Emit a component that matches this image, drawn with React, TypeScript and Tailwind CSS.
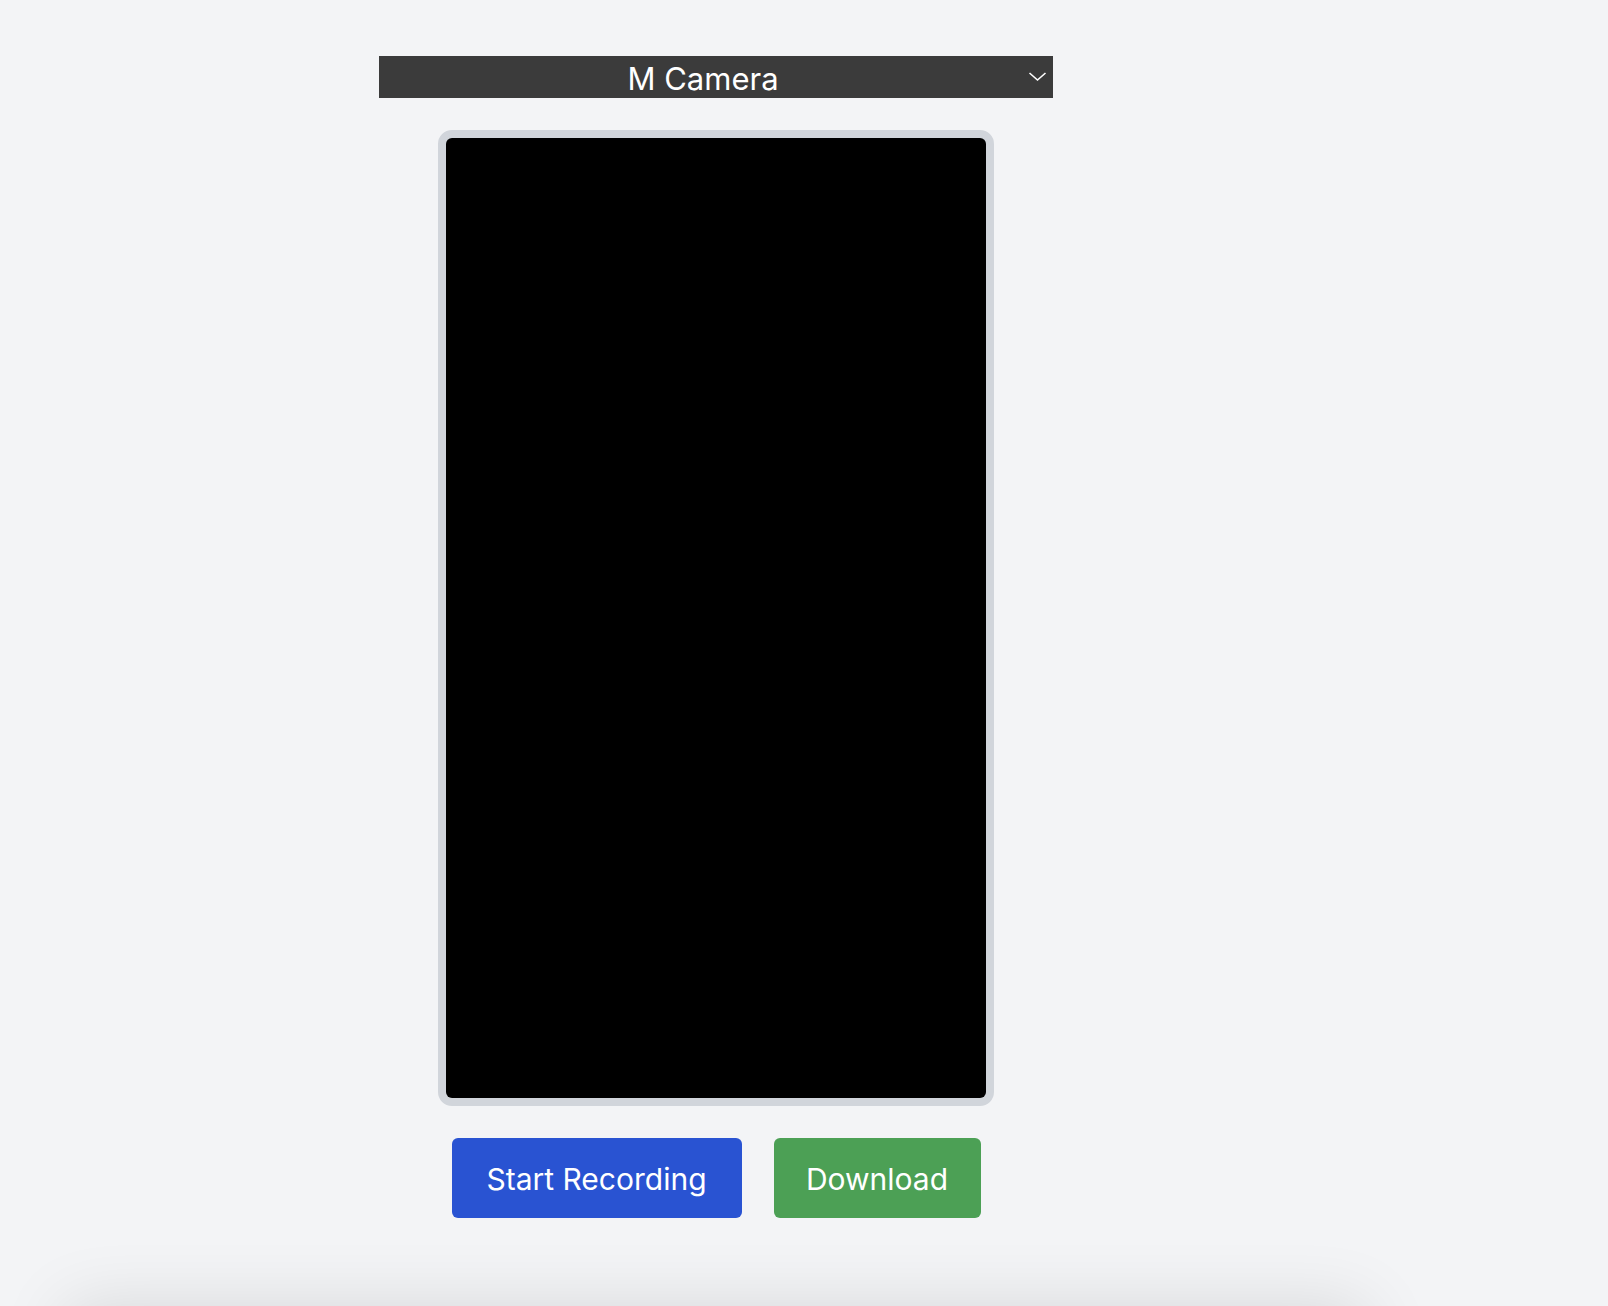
import React from "react";

export default function App() {
  return (
    <div className="min-h-screen bg-[#f3f4f6] overflow-hidden" style={{ fontFamily: "Inter, 'Noto Sans', sans-serif" }}>
      <div className="w-[1432px] flex flex-col items-center pt-[56px]">
        <div className="relative w-[674px] h-[42px] bg-[#3b3b3b] flex items-center justify-center">
          <span className="text-white text-[31px] leading-none pr-[26px] pt-[2px]">M Camera</span>
          <svg className="absolute right-[6px] top-[14px]" width="19" height="13" viewBox="0 0 19 13" fill="none">
            <path d="M1.5 3 L9.5 10 L17.5 3" stroke="white" strokeWidth="1.6" />
          </svg>
        </div>
        <div className="mt-[32px] w-[556px] h-[976px] border-8 border-[#d1d5db] rounded-[14px] bg-[#d1d5db]">
          <div className="w-full h-full bg-black rounded-[6px]" />
        </div>
        <div className="mt-[32px] flex gap-[32px]">
          <button className="w-[290px] h-[80px] rounded-[6px] bg-[#2953d2] text-white text-[30px] pt-[3px]">Start Recording</button>
          <button className="w-[207px] h-[80px] rounded-[6px] bg-[#4ca055] text-white text-[30px] pt-[3px]">Download</button>
        </div>
        <div className="mt-[89px] w-[1300px] h-[200px] bg-[#f3f4f6] shadow-[0_0_70px_rgba(0,0,0,0.12)]" />
      </div>
    </div>
  );
}
